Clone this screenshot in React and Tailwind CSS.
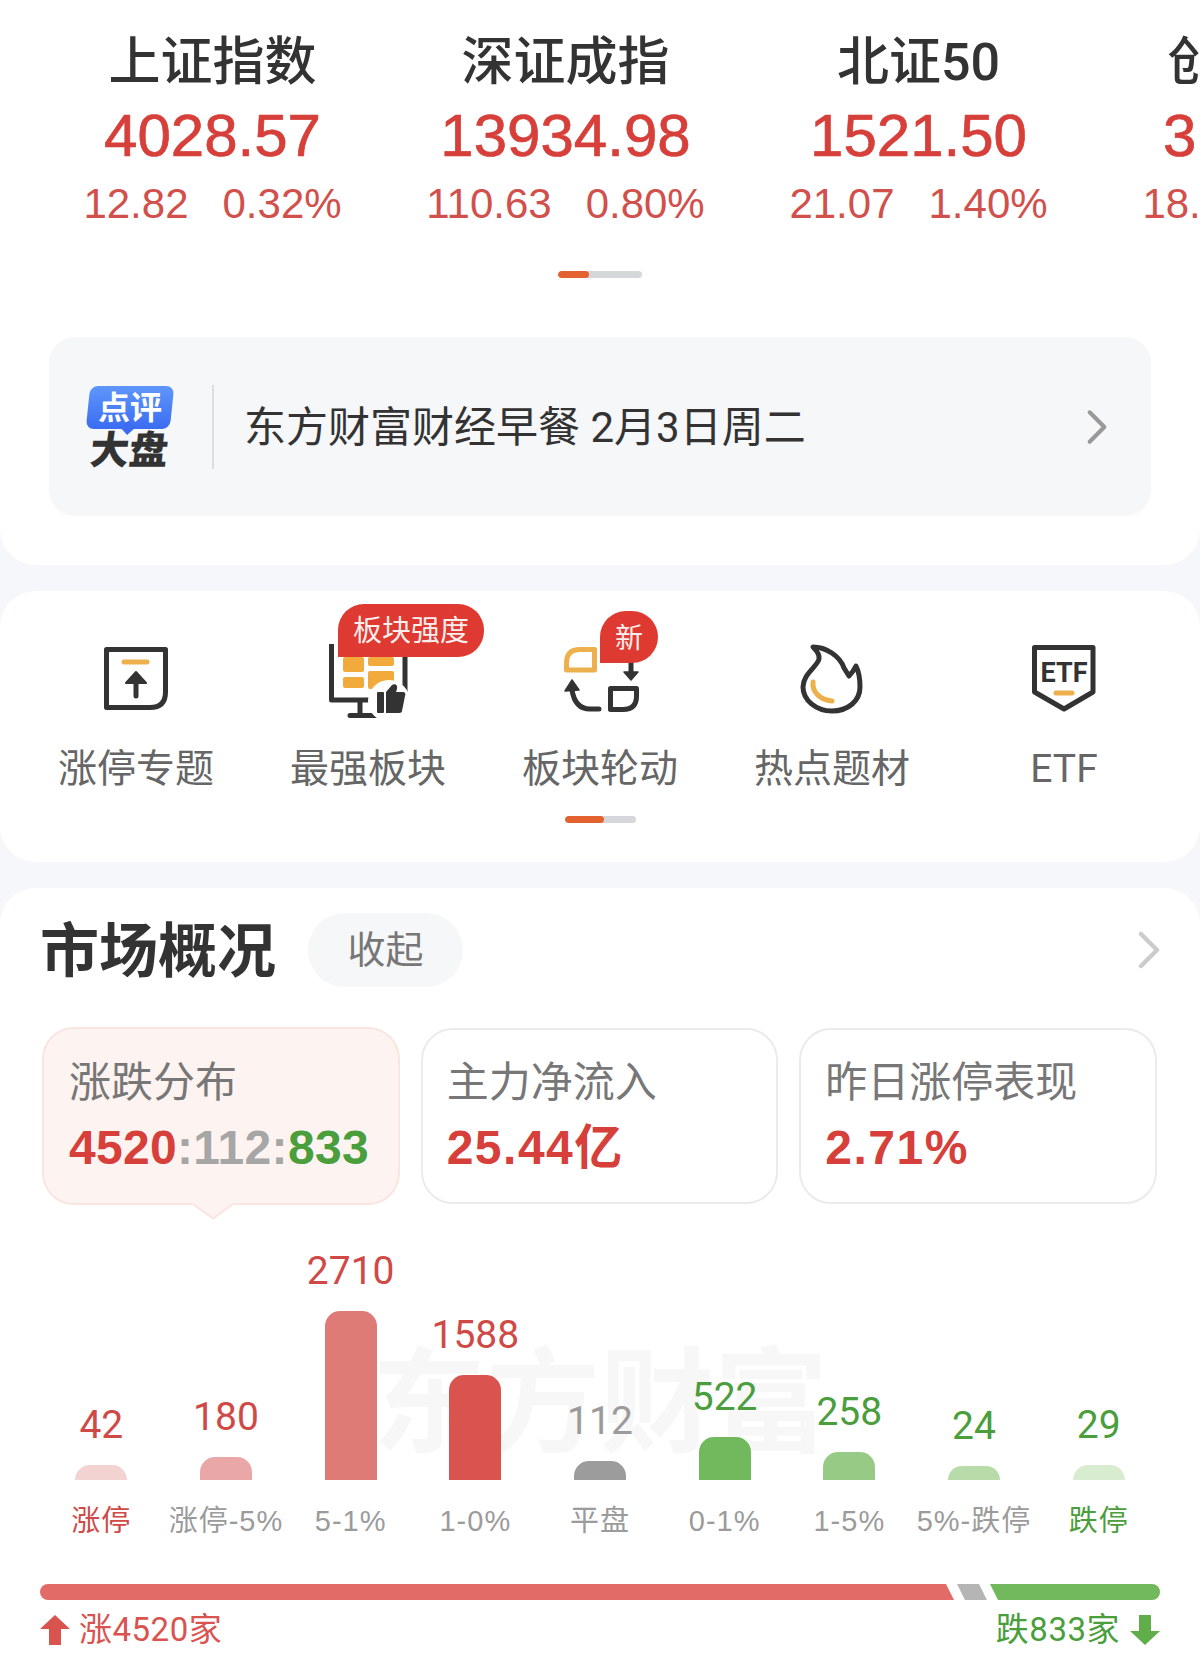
import React from 'react';

const indexes = [
  { name: '上证指数', price: '4028.57', diff: '12.82', pct: '0.32%' },
  { name: '深证成指', price: '13934.98', diff: '110.63', pct: '0.80%' },
  { name: '北证50', price: '1521.50', diff: '21.07', pct: '1.40%' },
  { name: '创业板指', price: '3190.46', diff: '18.26', pct: '0.57%' },
];

const bars = [
  { value: '42', label: '涨停', h: 15, bar: 'bg-[#f3d2d2]', valueCls: 'text-[#cf4a46]', labelCls: 'text-[#cf4a46]' },
  { value: '180', label: '涨停-5%', h: 23, bar: 'bg-[#e9a7a8]', valueCls: 'text-[#cf4a46]', labelCls: 'text-[#9b9b9b]' },
  { value: '2710', label: '5-1%', h: 169, bar: 'bg-[#df7b77]', valueCls: 'text-[#cf4a46]', labelCls: 'text-[#9b9b9b]' },
  { value: '1588', label: '1-0%', h: 105, bar: 'bg-[#d9534f]', valueCls: 'text-[#cf4a46]', labelCls: 'text-[#9b9b9b]' },
  { value: '112', label: '平盘', h: 19, bar: 'bg-[#9c9c9c]', valueCls: 'text-[#9b9b9b]', labelCls: 'text-[#9b9b9b]' },
  { value: '522', label: '0-1%', h: 43, bar: 'bg-[#72b85c]', valueCls: 'text-[#4a9e3c]', labelCls: 'text-[#9b9b9b]' },
  { value: '258', label: '1-5%', h: 28, bar: 'bg-[#97ca84]', valueCls: 'text-[#4a9e3c]', labelCls: 'text-[#9b9b9b]' },
  { value: '24', label: '5%-跌停', h: 14, bar: 'bg-[#b8dca9]', valueCls: 'text-[#4a9e3c]', labelCls: 'text-[#9b9b9b]' },
  { value: '29', label: '跌停', h: 15, bar: 'bg-[#d8ecd0]', valueCls: 'text-[#4a9e3c]', labelCls: 'text-[#4a9e3c]' },
];

function LimitIcon() {
  return (
    <svg viewBox="0 0 96 96" className="w-24 h-24" fill="none">
      <path d="M18.5 19.5H77.5V62Q77.5 77.5 62 77.5H18.5Z" stroke="#333" strokeWidth="5" strokeLinejoin="round" />
      <path d="M36 32H59" stroke="#eeb04c" strokeWidth="5" strokeLinecap="round" />
      <path d="M48 50V66" stroke="#333" strokeWidth="5" strokeLinecap="round" />
      <path d="M38 53L48 42L58 53Z" fill="#333" stroke="#333" strokeWidth="2" strokeLinejoin="round" />
    </svg>
  );
}

function MonitorIcon() {
  return (
    <svg viewBox="0 0 96 96" className="w-24 h-24" fill="none">
      <path d="M11.500 14V70H85V14" stroke="#333" strokeWidth="5" strokeLinejoin="round" />
      <path d="M40 72V85M30 85.500H56" stroke="#333" strokeWidth="5" strokeLinecap="round" />
      <rect x="23" y="27" width="21" height="15" rx="2" fill="#f3aa3c" />
      <rect x="23" y="47" width="21" height="11" rx="2" fill="#f3aa3c" />
      <rect x="48" y="27" width="26" height="9" rx="2" fill="#f3aa3c" />
      <rect x="48" y="41" width="26" height="18" rx="2" fill="#f3aa3c" />
      <circle cx="69" cy="71" r="21" fill="#fff" />
      <rect x="57" y="62" width="7" height="21" rx="1" fill="#333" />
      <path d="M66 62L72 55C75 53 78 55 77 59L76 62H83C85 62 86 64 85 66L82 81C82 82 81 83 79 83H66Z" fill="#333" />
    </svg>
  );
}

function RotateIcon() {
  return (
    <svg viewBox="0 0 96 96" className="w-24 h-24" fill="none">
      <path d="M42.500 19.500H28Q14.500 19.500 14.500 33V40H42.500Z" stroke="#eeb04c" strokeWidth="5" strokeLinejoin="round" />
      <path d="M58.500 58.500H84.500V66Q84.500 79.500 71 79.500H58.500Z" stroke="#333" strokeWidth="5" strokeLinejoin="round" />
      <path d="M47 79H38Q23 79 20 60" stroke="#333" strokeWidth="5" strokeLinecap="round" />
      <path d="M13 61L20 50L27 60Z" fill="#333" stroke="#333" strokeWidth="1.500" strokeLinejoin="round" />
      <path d="M79 30V44" stroke="#333" strokeWidth="5" />
      <path d="M72 42H86L79 50Z" fill="#333" stroke="#333" strokeWidth="1.500" strokeLinejoin="round" />
    </svg>
  );
}

function FireIcon() {
  return (
    <svg viewBox="0 0 96 96" className="w-24 h-24" fill="none">
      <path
        d="M29 17C42 17 56 26 60 38L65 46C68 43 70 40 72 36C75 42 76 50 76 57C76 71 64 81 48 81C32 81 19 70 19 57C19 44 33 37 35 29C36 25 33 21 29 17Z"
        stroke="#333"
        strokeWidth="5"
        strokeLinejoin="round"
      />
      <path d="M29 52C28 62 36 70 48 71" stroke="#eeb04c" strokeWidth="5" strokeLinecap="round" />
    </svg>
  );
}

function EtfIcon() {
  return (
    <svg viewBox="0 0 96 96" className="w-24 h-24" fill="none">
      <path d="M18.500 17.500H77V62L48 79L18.500 62Z" stroke="#333" strokeWidth="5" strokeLinejoin="round" />
      <text
        x="48"
        y="52"
        textAnchor="middle"
        fontSize="27"
        fontWeight="700"
        fontFamily="Roboto, sans-serif"
        fill="#333"
        textLength="47"
        lengthAdjust="spacingAndGlyphs"
      >
        ETF
      </text>
      <path d="M40 63H56" stroke="#eeb04c" strokeWidth="5" strokeLinecap="round" />
    </svg>
  );
}

function Chevron({ className }) {
  return (
    <svg viewBox="0 0 24 38" className={className} fill="none">
      <path d="M4 3L20 19L4 35" stroke="currentColor" strokeWidth="4.500" strokeLinecap="round" strokeLinejoin="round" />
    </svg>
  );
}

function Track({ className, fillClass }) {
  return (
    <div className={`h-[7px] rounded-full bg-[#d6d7db] overflow-hidden ${className}`}>
      <div className={`h-full rounded-full bg-[#e4622f] ${fillClass}`} />
    </div>
  );
}

export default function App() {
  return (
    <div className="w-[1200px] h-[1660px] overflow-hidden bg-[#f6f7fa] font-['Roboto','Noto_Sans_CJK_SC',sans-serif]">
      {/* indexes + morning note */}
      <section className="bg-white rounded-b-[36px] pt-[33px] pb-[49px]">
        <div className="flex pl-[36px] overflow-hidden">
          {indexes.map((item) => (
            <div key={item.name} className="w-[353px] shrink-0 flex flex-col items-center whitespace-nowrap">
              <div className="text-[52px] leading-[60px] font-medium text-[#333]">{item.name}</div>
              <div className="mt-2 text-[60px] leading-[70px] font-['Liberation_Sans',sans-serif] text-[#d63f3a] [-webkit-text-stroke:0.7px_#d63f3a]">{item.price}</div>
              <div className="mt-2 flex gap-[34px] text-[42px] leading-[50px] font-['Liberation_Sans',sans-serif] text-[#d2504c]">
                <span>{item.diff}</span>
                <span>{item.pct}</span>
              </div>
            </div>
          ))}
        </div>
        <Track className="w-[84px] mx-auto mt-[42px]" fillClass="w-[31px]" />

        <div className="mt-[59px] mx-[49px] h-[179px] rounded-[26px] bg-[#f6f7f9] flex items-center pl-[38px] pr-[43px]">
          <div className="w-[86px] pt-[2px] flex flex-col items-center shrink-0">
            <div className="relative w-[84px] h-[43px] rounded-[8px] -skew-x-6 bg-gradient-to-b from-[#5f96fb] to-[#3b6cf2] flex items-center justify-center">
              <span className="skew-x-6 text-[32px] leading-[40px] font-bold text-white">点评</span>
              <div className="absolute -bottom-[4px] left-[37px] w-[10px] h-[10px] rotate-45 bg-[#3b6cf2]" />
            </div>
            <div className="mt-[4px] -ml-[2px] -skew-x-6 text-[39px] leading-[36px] font-black text-[#333] whitespace-nowrap">大盘</div>
          </div>
          <div className="ml-[39px] w-[2px] h-[84px] bg-[#dddee0]" />
          <div className="ml-[30px] pt-[2px] text-[42px] leading-[50px] text-[#333] whitespace-nowrap">东方财富财经早餐 2月3日周二</div>
          <Chevron className="ml-auto w-[22px] h-[36px] text-[#999]" />
        </div>
      </section>

      {/* shortcuts */}
      <section className="mt-[26px] bg-white rounded-[36px] pt-[39px] pb-[39px]">
        <div className="grid grid-cols-5 px-[20px]">
          <div className="flex flex-col items-center">
            <LimitIcon />
            <div className="mt-[18px] text-[39px] leading-[50px] text-[#666]">涨停专题</div>
          </div>
          <div className="relative flex flex-col items-center">
            <MonitorIcon />
            <div className="mt-[18px] text-[39px] leading-[50px] text-[#666]">最强板块</div>
            <div className="absolute left-[86px] -top-[26px] w-[146px] h-[53px] pt-[2px] rounded-t-[26px] rounded-br-[26px] bg-[#de3a31] flex items-center justify-center text-[29px] text-[#fdeeee] whitespace-nowrap">
              板块强度
            </div>
          </div>
          <div className="relative flex flex-col items-center">
            <RotateIcon />
            <div className="mt-[18px] text-[39px] leading-[50px] text-[#666]">板块轮动</div>
            <div className="absolute left-[116px] -top-[19px] w-[58px] h-[52px] pt-[4px] rounded-t-[26px] rounded-br-[26px] bg-[#de3a31] flex items-center justify-center text-[28px] text-[#fdeeee]">
              新
            </div>
          </div>
          <div className="flex flex-col items-center">
            <FireIcon />
            <div className="mt-[18px] text-[39px] leading-[50px] text-[#666]">热点题材</div>
          </div>
          <div className="flex flex-col items-center">
            <EtfIcon />
            <div className="mt-[18px] text-[39px] leading-[50px] text-[#666]">ETF</div>
          </div>
        </div>
        <Track className="w-[71px] mx-auto mt-[22px]" fillClass="w-[39px]" />
      </section>

      {/* market overview */}
      <section className="mt-[26px] bg-white rounded-t-[36px] pt-[25px] h-[800px]">
        <div className="flex items-center pl-[40px] pr-[39px]">
          <h2 className="pt-[3px] w-[234px] text-[59px] leading-[71px] font-bold text-[#333] whitespace-nowrap">市场概况</h2>
          <div className="ml-[34px] w-[155px] h-[74px] rounded-full bg-[#f6f7f9] flex items-center justify-center text-[38px] text-[#777]">
            收起
          </div>
          <Chevron className="ml-auto w-[24px] h-[38px] text-[#ccc]" />
        </div>

        <div className="mt-[40px] ml-[42px] mr-[43px] grid grid-cols-3 gap-[21px] items-center">
          <div className="relative h-[178px] rounded-[32px] border-2 border-[#fae6e0] bg-[#fdf3f0] pl-[25px] pt-[29px]">
            <div className="text-[42px] leading-[50px] text-[#777]">涨跌分布</div>
            <div className="mt-[10px] text-[48px] leading-[60px] font-bold tracking-[0.3px] font-['Liberation_Sans',sans-serif] whitespace-nowrap">
              <span className="text-[#d63f3a]">4520</span>
              <span className="text-[#a6a6a6]">:112:</span>
              <span className="text-[#4a9e3c]">833</span>
            </div>
            <svg viewBox="0 0 42 17" className="absolute top-full left-[148px] w-[42px] h-[17px]">
              <path d="M0 -1H42V1L21 16L0 1Z" fill="#fdf3f0" />
              <path d="M1 1L21 15.500L41 1" fill="none" stroke="#fae6e0" strokeWidth="2" />
            </svg>
          </div>
          <div className="h-[176px] rounded-[32px] border-2 border-[#ebebeb] pl-[24px] pt-[28px]">
            <div className="text-[42px] leading-[50px] text-[#777]">主力净流入</div>
            <div className="mt-[10px] text-[48px] leading-[60px] font-bold tracking-[1.500px] font-['Liberation_Sans','Noto_Sans_CJK_SC',sans-serif] text-[#d63f3a]">25.44亿</div>
          </div>
          <div className="h-[176px] rounded-[32px] border-2 border-[#ebebeb] pl-[24px] pt-[28px]">
            <div className="text-[42px] leading-[50px] text-[#777]">昨日涨停表现</div>
            <div className="mt-[10px] text-[48px] leading-[60px] font-bold tracking-[1.500px] font-['Liberation_Sans',sans-serif] text-[#d63f3a]">2.71%</div>
          </div>
        </div>

        <div className="relative">
          <div className="absolute left-[372px] top-[142px] text-[114px] leading-[114px] font-bold text-[#f7f7f8] whitespace-nowrap">东方财富</div>
          <div className="relative grid grid-cols-9 items-end h-[275px] px-[39px]">
            {bars.map((b) => (
              <div key={b.label} className="flex flex-col items-center">
                <div className={`text-[39px] leading-[40px] mb-[20px] ${b.valueCls}`}>{b.value}</div>
                <div className={`w-[52px] rounded-t-[15px] ${b.bar}`} style={{ height: b.h }} />
              </div>
            ))}
          </div>
          <div className="relative grid grid-cols-9 mt-[21px] px-[39px]">
            {bars.map((b) => (
              <div key={b.label} className={`text-center text-[29px] leading-[40px] tracking-[1px] whitespace-nowrap font-['Liberation_Sans','Noto_Sans_CJK_SC',sans-serif] ${b.labelCls}`}>
                {b.label}
              </div>
            ))}
          </div>
        </div>

        <div className="mt-[43px] mx-[40px] flex h-4">
          <div className="w-[914px] rounded-l-full bg-[#e26b68] [clip-path:polygon(0_0,calc(100%-8px)_0,100%_100%,0_100%)]" />
          <div className="ml-[3px] w-[30px] bg-[#b5b5b5] [clip-path:polygon(0_0,22px_0,100%_100%,8px_100%)]" />
          <div className="ml-[3px] w-[170px] rounded-r-full bg-[#72b85c] [clip-path:polygon(0_0,100%_0,100%_100%,8px_100%)]" />
        </div>

        <div className="mt-[10px] mx-[40px] flex justify-between items-center text-[33px] leading-[40px] tracking-[0.5px]">
          <div className="flex items-center gap-[9px] text-[#d9534f]">
            <svg viewBox="0 0 30 30" className="w-[30px] h-[30px]">
              <path d="M15 0L30 14H21V30H9V14H0Z" fill="#d9534f" />
            </svg>
            <span>涨4520家</span>
          </div>
          <div className="flex items-center gap-[10px] text-[#4a9e3c]">
            <span>跌833家</span>
            <svg viewBox="0 0 30 30" className="w-[30px] h-[30px]">
              <path d="M9 0H21V16H30L15 30L0 16H9Z" fill="#5fae4a" />
            </svg>
          </div>
        </div>
      </section>
    </div>
  );
}
